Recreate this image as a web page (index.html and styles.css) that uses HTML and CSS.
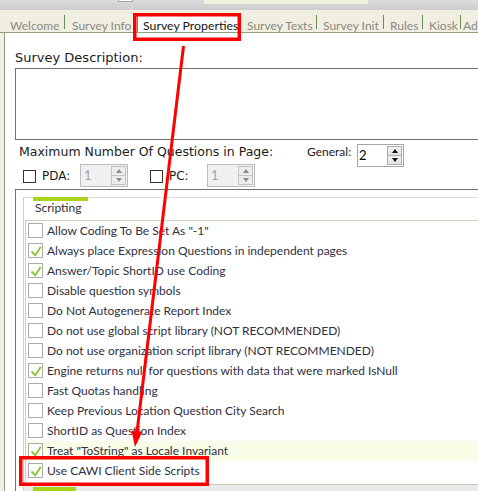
FILE: index.html
```html
<!DOCTYPE html>
<html lang="en">
<head>
    <meta charset="UTF-8">
    <title>Survey Properties</title>
    <link rel="stylesheet" href="styles.css">
</head>
<body>
    <div class="titlebar">
        <span class="tb-btn"></span>
        <span class="tb-strip"></span>
    </div>
    <div class="tabbar">
        <div class="tab tab-welcome">Welcome</div>
        <span class="sep"></span>
        <div class="tab tab-info">Survey Info</div>
        <div class="tab active">Survey Properties</div>
        <div class="tab tab-texts">Survey Texts</div>
        <span class="sep"></span>
        <div class="tab tab-init">Survey Init</div>
        <span class="sep"></span>
        <div class="tab tab-rules">Rules</div>
        <span class="sep"></span>
        <div class="tab tab-kiosk">Kiosk</div>
        <span class="sep"></span>
        <div class="tab tab-ad">Ad</div>
    </div>
    <div class="page">
        <div class="label desc-label">Survey Description:</div>
        <div class="desc-box"></div>

        <div class="limits">
            <div class="label max-label">Maximum Number Of Questions in Page:</div>
            <div class="general">General:</div>
            <div class="spin">
                <div class="spin-val">2</div>
                <div class="spin-btns">
                    <span class="spin-btn up"></span>
                    <span class="spin-btn down"></span>
                </div>
            </div>
        </div>

        <div class="devices">
            <span class="chk"></span>
            <span class="dev-label">PDA:</span>
            <div class="spin disabled">
                <div class="spin-val">1</div>
                <div class="spin-btns">
                    <span class="spin-btn up"></span>
                    <span class="spin-btn down"></span>
                </div>
            </div>
            <span class="chk chk-pc"></span>
            <span class="dev-label">PC:</span>
            <div class="spin disabled">
                <div class="spin-val">1</div>
                <div class="spin-btns">
                    <span class="spin-btn up"></span>
                    <span class="spin-btn down"></span>
                </div>
            </div>
        </div>

        <div class="group">
            <div class="panel">
                <div class="panel-tab">Scripting</div>
                <div class="list" id="optionList"></div>
                <div class="panel-foot"><span class="foot-tab"></span></div>
            </div>
        </div>
    </div>

    <svg class="marks" width="478" height="491" viewBox="0 0 478 491">
        <rect x="134.75" y="14.75" width="104.5" height="24.5" fill="none" stroke="#ff0000" stroke-width="3.5"/>
        <rect x="20.75" y="457.75" width="186.5" height="26.5" fill="none" stroke="#ff0000" stroke-width="3.5"/>
        <line x1="183.5" y1="46" x2="137" y2="432" stroke="#ff0000" stroke-width="3"/>
        <polygon points="135,447 142.4,431.8 131.5,430.4" fill="#ff0000"/>
    </svg>

    <script>
        const options = [
            ['Allow Coding To Be Set As "-1"', false],
            ['Always place Expression Questions in independent pages', true],
            ['Answer/Topic ShortID use Coding', true],
            ['Disable question symbols', false],
            ['Do Not Autogenerate Report Index', false],
            ['Do not use global script library (NOT RECOMMENDED)', false],
            ['Do not use organization script library (NOT RECOMMENDED)', false],
            ['Engine returns null for questions with data that were marked IsNull', true],
            ['Fast Quotas handling', false],
            ['Keep Previous Location Question City Search', false],
            ['ShortID as Question Index', false],
            ['Treat "ToString" as Locale Invariant', true],
            ['Use CAWI Client Side Scripts', true]
        ];

        const tick = '<svg width="13" height="13" viewBox="0 0 13 13"><path d="M2.5 7.5 L6.3 11.2 L11.8 2.8" fill="none" stroke="#8dc641" stroke-width="2"/></svg>';

        const list = document.getElementById('optionList');
        options.forEach((opt, i) => {
            const row = document.createElement('div');
            row.className = 'row' + (i === 11 ? ' sel' : '');
            const box = document.createElement('span');
            box.className = 'cb';
            if (opt[1]) box.innerHTML = tick;
            const text = document.createElement('span');
            text.className = 'row-text';
            text.textContent = opt[0];
            row.appendChild(box);
            row.appendChild(text);
            list.appendChild(row);
        });
    </script>
</body>
</html>
```

FILE: styles.css
```css
body {
    margin: 0;
    width: 478px;
    height: 491px;
    overflow: hidden;
    position: relative;
    background-color: #f0efe2;
    font-family: Lato, sans-serif;
}
.titlebar {
    height: 10px;
    display: flex;
    align-items: flex-start;
    background: linear-gradient(#dbdbdb, #cdcdcd);
}
.tb-btn {
    margin-left: 118px;
    width: 15px;
    height: 2px;
    background-color: #ffffff;
    border: 1px solid #a3a3a3;
    border-top: none;
    box-sizing: border-box;
}
.tb-strip {
    margin-left: 71px;
    width: 164px;
    height: 4px;
    background-color: #eef2dc;
}
.tabbar {
    display: flex;
    align-items: flex-end;
    height: 22px;
    padding-left: 10px;
    border-bottom: 1px solid #8fa07d;
    font-size: 12px;
    color: #8b8a7f;
    white-space: nowrap;
    overflow: hidden;
}
.tab {
    height: 13px;
    line-height: 13px;
    box-sizing: border-box;
    flex-shrink: 0;
}
.sep {
    width: 1px;
    height: 14px;
    margin-bottom: 3px;
    background-color: #6f8c57;
    flex-shrink: 0;
}
.tab-welcome { width: 54px; }
.tab-info { width: 72px; padding-left: 7px; }
.tab.active {
    width: 104px;
    height: 19px;
    margin-bottom: -1px;
    padding-left: 5px;
    padding-top: 5px;
    background-color: #ffffff;
    border-left: 1px solid #6f8c57;
    color: #141414;
    font-size: 12.3px;
}
.tab-texts { width: 75px; padding-left: 6px; }
.tab-init { width: 66px; padding-left: 6px; }
.tab-rules { width: 38px; padding-left: 6px; }
.tab-kiosk { width: 37px; padding-left: 6px; }
.tab-ad { padding-left: 2px; }

.page {
    margin-left: 4px;
    width: 600px;
    height: 458px;
    padding: 17px 0 0 10px;
    box-sizing: border-box;
    background-color: #ffffff;
    border-left: 1px solid #8c9b7c;
}
.label {
    font-family: "DejaVu Sans", sans-serif;
    font-size: 12.5px;
    line-height: 15px;
    color: #1b1b1b;
}
.desc-label {
    font-size: 13px;
}
.desc-box {
    margin-top: 3px;
    height: 72px;
    border: 1px solid #707070;
    box-sizing: border-box;
}
.limits {
    display: flex;
    align-items: flex-start;
    height: 20px;
    margin-top: 4px;
}
.max-label {
    width: 288px;
    margin-left: 4px;
    flex-shrink: 0;
}
.general {
    width: 50px;
    font-size: 12px;
    line-height: 15px;
    color: #1b1b1b;
    flex-shrink: 0;
}
.spin {
    display: flex;
    width: 47px;
    height: 23px;
    box-sizing: border-box;
    border: 1px solid #a6a6a6;
    background-color: #ffffff;
    flex-shrink: 0;
}
.spin-val {
    flex: 1;
    padding-left: 1px;
    font-size: 13px;
    line-height: 20px;
    color: #000000;
}
.spin-btns {
    display: flex;
    flex-direction: column;
    width: 15px;
    padding: 1px 1px 1px 0;
}
.spin-btn {
    flex: 1;
    display: flex;
    align-items: center;
    justify-content: center;
    border: 1px solid #adadad;
    background: linear-gradient(#f3f3f3, #e2e2e2);
}
.spin-btn + .spin-btn {
    border-top: none;
}
.spin-btn::after {
    content: "";
    border-left: 3.5px solid transparent;
    border-right: 3.5px solid transparent;
}
.up::after {
    border-bottom: 4px solid #111111;
}
.down::after {
    border-top: 4px solid #111111;
}
.spin.disabled {
    width: 48px;
    background-color: #f0f0f0;
    border-color: #bcbcbc;
}
.spin.disabled .spin-val {
    color: #a4a4a4;
    padding-left: 3px;
}
.spin.disabled .spin-btn {
    border-color: #c4c4c4;
    background: #ececec;
}
.spin.disabled .up::after {
    border-bottom-color: #8d8d8d;
}
.spin.disabled .down::after {
    border-top-color: #8d8d8d;
}

.devices {
    display: flex;
    align-items: flex-start;
    height: 23px;
}
.chk {
    width: 13px;
    height: 13px;
    margin: 6px 0 0 8px;
    box-sizing: border-box;
    border: 1px solid #333333;
    flex-shrink: 0;
}
.chk-pc {
    margin-left: 22px;
}
.dev-label {
    width: 38px;
    margin-left: 6px;
    padding-top: 5px;
    font-family: "DejaVu Sans", sans-serif;
    font-size: 12px;
    line-height: 15px;
    color: #1b1b1b;
    flex-shrink: 0;
}

.group {
    margin-top: 2px;
    padding: 7px 0 0 7px;
    border-top: 1px solid #707070;
    border-left: 1px solid #707070;
}
.panel {
    border-top: 1px solid #dcdcdc;
    border-left: 1px solid #cdcdcd;
}
.panel-tab {
    width: 53px;
    margin: -1px 0 5px 9px;
    padding-left: 2px;
    border-top: 4px solid #a9d219;
    font-size: 12px;
    line-height: 14px;
    color: #2e2e3c;
    white-space: nowrap;
}
.list {
    margin-left: 1px;
    padding-bottom: 3px;
    border-top: 1px solid #cfcfc0;
    border-left: 1px solid #cfcfc0;
    border-bottom: 1px solid #c6c6b6;
}
.row {
    display: flex;
    align-items: flex-start;
    height: 20px;
    padding-left: 2px;
}
.row.sel {
    background-color: #f7fde6;
}
.cb {
    width: 15px;
    height: 15px;
    margin-top: 2px;
    box-sizing: border-box;
    border: 1px solid #ababab;
    background-color: #ffffff;
    flex-shrink: 0;
}
.cb svg {
    display: block;
}
.row-text {
    margin-left: 4px;
    font-size: 12px;
    line-height: 20px;
    color: #30303f;
    white-space: nowrap;
}
.panel-foot {
    height: 10px;
    padding-top: 2px;
    background-color: #ebebeb;
}
.foot-tab {
    display: block;
    width: 43px;
    height: 4px;
    margin-left: 9px;
    background-color: #a9d219;
}
.marks {
    position: absolute;
    top: 0;
    left: 0;
    pointer-events: none;
}
```
